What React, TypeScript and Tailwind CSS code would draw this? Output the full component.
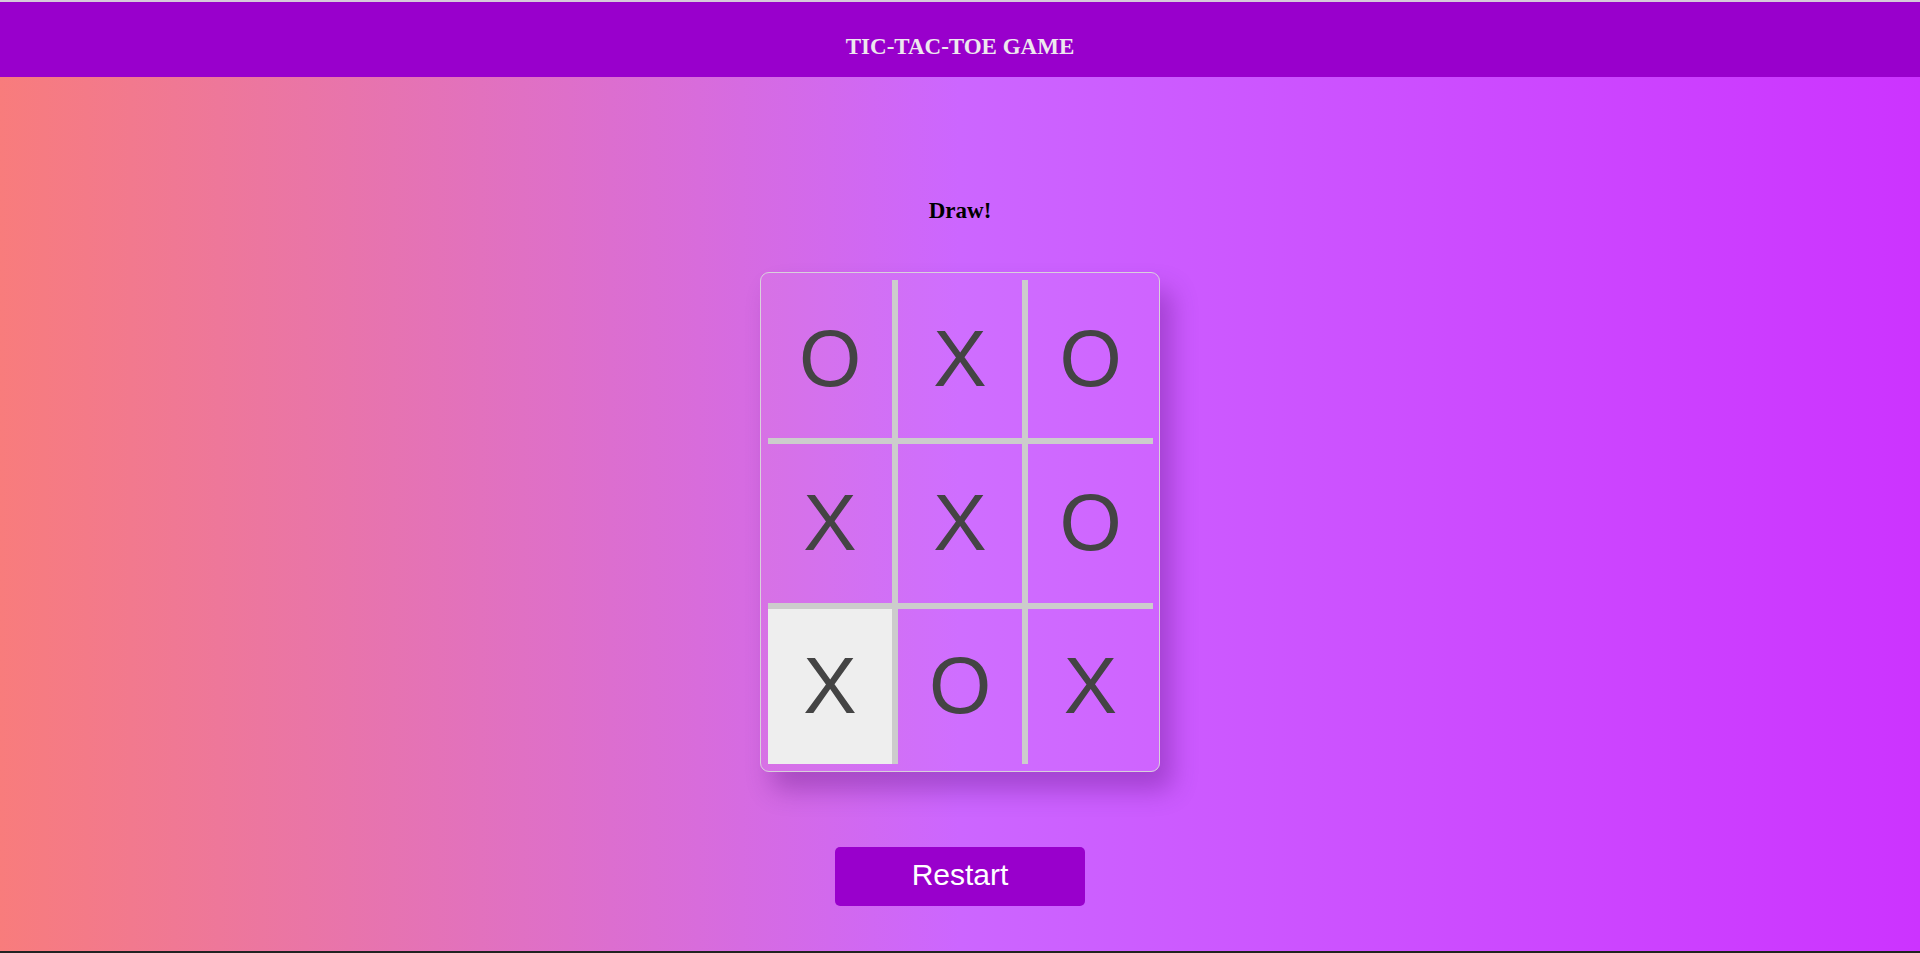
import React from "react";

const board = ["O", "X", "O", "X", "X", "O", "X", "O", "X"];
const highlighted = 6;

export default function App() {
  return (
    <div className="flex min-h-[953px] w-full flex-col">
      <div className="h-[2px] bg-[#d6cada]" />
      {/* Header */}
      <header className="h-[75px] bg-[#9900cc] pt-[28px] text-center">
        <h1 className="text-[23px] font-bold leading-normal text-[#eee8ee] [font-family:'Liberation_Serif',serif]">
          TIC-TAC-TOE GAME
        </h1>
      </header>

      {/* Main */}
      <main className="flex flex-1 flex-col items-center bg-[linear-gradient(to_right,#f87c7c,#cc66ff_50%,#cc33ff)] pt-[117px]">
        <p className="text-[23px] font-bold leading-normal text-black [font-family:'Liberation_Serif',serif]">Draw!</p>

        <div className="mt-[43px] h-[500px] w-[400px] rounded-[9px] border border-[#d9d0dc] bg-white/5 pl-[7px] pr-[6px] pt-[7px] pb-[7px] shadow-[12px_18px_26px_rgba(70,0,100,0.3)]">
          <div className="grid h-full grid-cols-[130px_130px_125px] grid-rows-[164px_165px_155px]">
            {board.map((v, i) => {
              const col = i % 3;
              const row = Math.floor(i / 3);
              return (
                <div
                  key={i}
                  className={`flex items-center justify-center border-[#cccccc] text-[80px] leading-none text-[#444444] [font-family:'Liberation_Sans',Arial,sans-serif] ${
                    col < 2 ? "border-r-[6px]" : ""
                  } ${row < 2 ? "border-b-[6px]" : ""} ${i === highlighted ? "bg-[#eeeeee]" : ""}`}
                >
                  {v}
                </div>
              );
            })}
          </div>
        </div>

        <button className="mt-[75px] h-[59px] w-[250px] rounded-[5px] bg-[#9900cc] pb-[3px] text-[30px] text-white [font-family:'Liberation_Sans',Arial,sans-serif]">
          Restart
        </button>
      </main>
      <div className="h-[2px] bg-[#222222]" />
    </div>
  );
}
